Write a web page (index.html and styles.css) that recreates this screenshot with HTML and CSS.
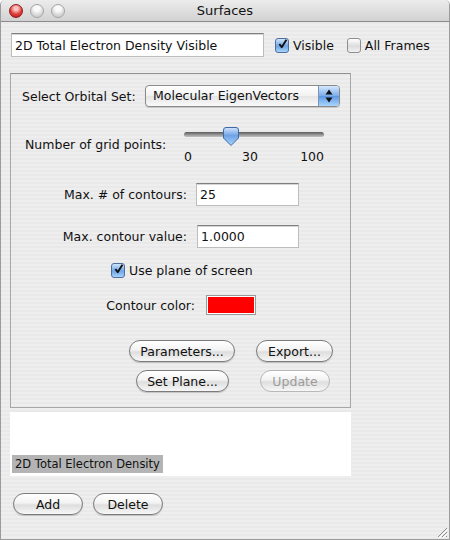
FILE: index.html
```html
<!DOCTYPE html>
<html>
<head>
<meta charset="utf-8">
<link rel="stylesheet" href="styles.css">
</head>
<body>
<div class="window">
  <div class="titlebar">
    <div class="lights">
      <span class="light red"></span>
      <span class="light"></span>
      <span class="light"></span>
    </div>
    <div class="title">Surfaces</div>
  </div>
  <div class="content">
    <div class="toprow">
      <div class="field name">2D Total Electron Density Visible</div>
      <div class="check check-visible">
        <span class="box on"><svg viewBox="0 0 14 14" width="14" height="14"><path d="M3 7 L6 11 L12 1.5" fill="none" stroke="#111" stroke-width="2.4" stroke-linejoin="round"/></svg></span>
        <span>Visible</span>
      </div>
      <div class="check check-all">
        <span class="box"></span>
        <span>All Frames</span>
      </div>
    </div>

    <div class="group">
      <div class="row row-orbital">
        <span class="lbl">Select Orbital Set:</span>
        <div class="popup">
          <span class="popup-text">Molecular EigenVectors</span>
          <span class="popup-arrows"><svg viewBox="0 0 20 20" width="20" height="20"><path d="M10 3.5 L13.5 8.5 L6.5 8.5 Z M10 16.5 L13.5 11.5 L6.5 11.5 Z" fill="#111"/></svg></span>
        </div>
      </div>

      <div class="row row-slider">
        <span class="lbl">Number of grid points:</span>
        <div class="slider">
          <div class="track-area">
            <div class="track"></div>
            <span class="thumb"><svg viewBox="0 0 16 19" width="16" height="19"><defs><linearGradient id="tg" x1="0" y1="0" x2="0" y2="1"><stop offset="0" stop-color="#d4e6fb"/><stop offset="0.45" stop-color="#6fa2e6"/><stop offset="1" stop-color="#a9d4fb"/></linearGradient></defs><path d="M3 0.5 H13 Q15.5 0.5 15.5 3 V11 L8 18.5 L0.5 11 V3 Q0.5 0.5 3 0.5 Z" fill="url(#tg)" stroke="#3f68a8" stroke-width="1"/></svg></span>
          </div>
          <div class="ticks"><span class="t0">0</span><span class="t30">30</span><span class="t100">100</span></div>
        </div>
      </div>

      <div class="row row-field row-contours">
        <span class="lbl">Max. # of contours:</span>
        <div class="field small">25</div>
      </div>

      <div class="row row-field row-value">
        <span class="lbl">Max. contour value:</span>
        <div class="field small">1.0000</div>
      </div>

      <div class="row row-check">
        <div class="check">
          <span class="box on"><svg viewBox="0 0 14 14" width="14" height="14"><path d="M3 7 L6 11 L12 1.5" fill="none" stroke="#111" stroke-width="2.4" stroke-linejoin="round"/></svg></span>
          <span>Use plane of screen</span>
        </div>
      </div>

      <div class="row row-color">
        <span class="lbl">Contour color:</span>
        <span class="swatch"></span>
      </div>

      <div class="row btnrow btnrow1">
        <span class="btn w-params">Parameters...</span>
        <span class="btn w-export">Export...</span>
      </div>
      <div class="row btnrow btnrow2">
        <span class="btn w-plane">Set Plane...</span>
        <span class="btn w-update disabled">Update</span>
      </div>
    </div>

    <div class="list">
      <div class="item selected">2D Total Electron Density</div>
    </div>

    <div class="bottom">
      <span class="btn w-add">Add</span>
      <span class="btn w-delete">Delete</span>
    </div>
  </div>
  <span class="grip"><svg viewBox="0 0 12 12" width="12" height="12"><path d="M11 2 L2 11 M11 6 L6 11 M11 10 L10 11" stroke="#8a8a8a" stroke-width="1"/><path d="M12 3 L3 12 M12 7 L7 12" stroke="#fff" stroke-width="1"/></svg></span>
</div>
</body>
</html>
```

FILE: styles.css
```css
* { box-sizing: border-box; }
html, body { margin: 0; padding: 0; background: #fff; }
body {
  font-family: "DejaVu Sans", "Liberation Sans", sans-serif;
  font-size: 12px;
  color: #111;
}
.window {
  position: relative;
  width: 450px;
  height: 540px;
  border: 1px solid #9c9c9c;
  border-top: none;
  border-radius: 5px 5px 0 0;
  overflow: hidden;
  background: repeating-linear-gradient(to bottom, #eeeeee 0 2px, #e9e9e9 2px 4px);
  display: flex;
  flex-direction: column;
}
.titlebar {
  height: 22px;
  flex: 0 0 22px;
  background: linear-gradient(to bottom, #ececec, #d2d2d2);
  border-bottom: 1px solid #8c8c8c;
  display: flex;
  align-items: center;
  position: relative;
}
.lights { display: flex; gap: 7px; padding-left: 8px; }
.light {
  width: 14px; height: 14px; border-radius: 50%;
  background: radial-gradient(circle at 50% 30%, #fafafa 0 25%, #d9d9d9 60%, #c4c4c4 100%);
  border: 1px solid #a4a4a4;
}
.light.red {
  background: radial-gradient(circle at 50% 30%, #f9c3c3 0 18%, #e0403c 55%, #b3140f 100%);
  border-color: #8e1d1a;
}
.title {
  position: absolute; left: 0; right: 0; top: 0; height: 21px;
  line-height: 22px; text-align: center; font-size: 13px;
}
.content {
  flex: 1;
  padding: 11px 0 0 9px;
  display: flex;
  flex-direction: column;
}
.toprow { display: flex; align-items: center; height: 24px; }
.field {
  background: #fff;
  border: 1px solid #bdbdbd;
  border-top-color: #7e7e7e;
  box-shadow: inset 0 1px 0 #d6d6d6;
  height: 24px;
  padding: 0 3px;
  display: flex; align-items: center;
  white-space: nowrap;
}
.field.name { width: 253px; margin-left: 1px; font-size: 12.5px; }
.check { display: flex; align-items: center; gap: 4px; white-space: nowrap; font-size: 12.5px; }
.check-visible { margin-left: 11px; }
.check-all { margin-left: 13px; }
.box {
  width: 14px; height: 15px;
  border: 1px solid #8e8e8e;
  border-radius: 3px;
  background: linear-gradient(to bottom, #ffffff, #dcdcdc 55%, #f2f2f2);
  display: inline-flex; align-items: center; justify-content: center;
  overflow: visible;
}
.box.on {
  background: linear-gradient(to bottom, #cfe4fb, #6ea5e8 55%, #a8d3fa);
  border-color: #4d6f9e;
}
.box svg { margin-top: -3px; margin-left: 1px; }

.group {
  margin-top: 16px;
  width: 341px;
  border: 1px solid #a7a7a7;
  border-top-color: #8f8f8f;
  padding: 11px 0 15px 0;
  display: flex;
  flex-direction: column;
}
.row { display: flex; align-items: center; white-space: nowrap; }
.lbl { font-size: 12.5px; }

.row-orbital { padding-left: 11px; height: 22px; }
.row-orbital .lbl { width: 123px; }
.popup {
  width: 195px; height: 22px;
  border: 1px solid #8a8a8a;
  border-radius: 4px;
  display: flex;
  background: linear-gradient(to bottom, #ffffff, #f1f1f1 50%, #e4e4e4 51%, #fafafa);
  overflow: hidden;
  box-shadow: 0 1px 1px rgba(0,0,0,0.15);
}
.popup-text { flex: 1; padding-left: 7px; line-height: 20px; font-size: 12.5px; }
.popup-arrows {
  width: 21px;
  border-left: 1px solid #7d93b5;
  background: linear-gradient(to bottom, #d6e8fc, #79ace9 50%, #5d98e2 51%, #a9d6fd);
  display: flex; align-items: center; justify-content: center;
}

.row-slider { margin-top: 17px; padding-left: 14px; }
.row-slider .lbl { width: 159px; }
.slider { width: 140px; display: flex; flex-direction: column; padding-top: 1px; }
.track-area { position: relative; height: 22px; display: flex; align-items: center; }
.track {
  width: 140px; height: 5px; border-radius: 3px;
  background: linear-gradient(to bottom, #5a5a5a, #9a9a9a 60%, #c2c2c2);
  margin-top: -3px;
}
.thumb { position: absolute; left: 39px; top: 2px; width: 16px; height: 19px; display: block; }
.thumb svg { display: block; }
.ticks { position: relative; height: 16px; font-size: 12.5px; margin-top: 2px; }
.ticks span { position: absolute; top: 0; line-height: 16px; }
.t0 { left: 0; }
.t30 { left: 58px; }
.t100 { right: 0; }

.row-field .lbl { width: 176px; text-align: right; }
.row-field .field { height: 23px; }
.row-contours { margin-top: 18px; }
.row-contours .field { margin-left: 9px; width: 103px; }
.row-value { margin-top: 19px; }
.row-value .field { margin-left: 10px; width: 102px; }
.row-field .field { font-size: 12.5px; }

.row-check { margin-top: 14px; padding-left: 100px; height: 17px; }
.row-check .check { gap: 4px; }

.row-color { margin-top: 16px; height: 20px; }
.row-color .lbl { width: 184px; text-align: right; }
.swatch {
  margin-left: 11px;
  width: 50px; height: 20px;
  background: #ff0000;
  border: 1px solid #9a9a9a;
  box-shadow: inset 0 0 0 1px #fff;
}

.btn {
  height: 22px;
  border: 1px solid #7b7b7b;
  border-radius: 11px;
  background: linear-gradient(to bottom, #ffffff, #f3f3f3 45%, #dedede 55%, #f7f7f7);
  box-shadow: 0 1px 1px rgba(0,0,0,0.18);
  display: inline-flex; align-items: center; justify-content: center;
  font-size: 12.5px;
  white-space: nowrap;
}
.btn.disabled { color: #9c9c9c; border-color: #b8b8b8; box-shadow: none; }
.btnrow1 { margin-top: 25px; padding-left: 118px; gap: 21px; }
.btnrow2 { margin-top: 8px; padding-left: 125px; gap: 31px; }
.w-params { width: 106px; }
.w-export { width: 77px; }
.w-plane { width: 93px; }
.w-update { width: 70px; }

.list {
  margin-top: 4px;
  width: 341px;
  height: 64px;
  background: #fff;
  display: flex; flex-direction: column; justify-content: flex-end;
  padding: 0 0 3px 2px;
}
.item { font-size: 11.5px; line-height: 18px; padding: 0 3px; align-self: flex-start; }
.item.selected { background: #b4b4b4; }

.bottom { margin-top: 17px; display: flex; gap: 10px; padding-left: 3px; }
.w-add { width: 70px; }
.w-delete { width: 70px; }

.grip { position: absolute; right: 1px; bottom: 1px; width: 12px; height: 12px; }
.grip svg { display: block; }
```
